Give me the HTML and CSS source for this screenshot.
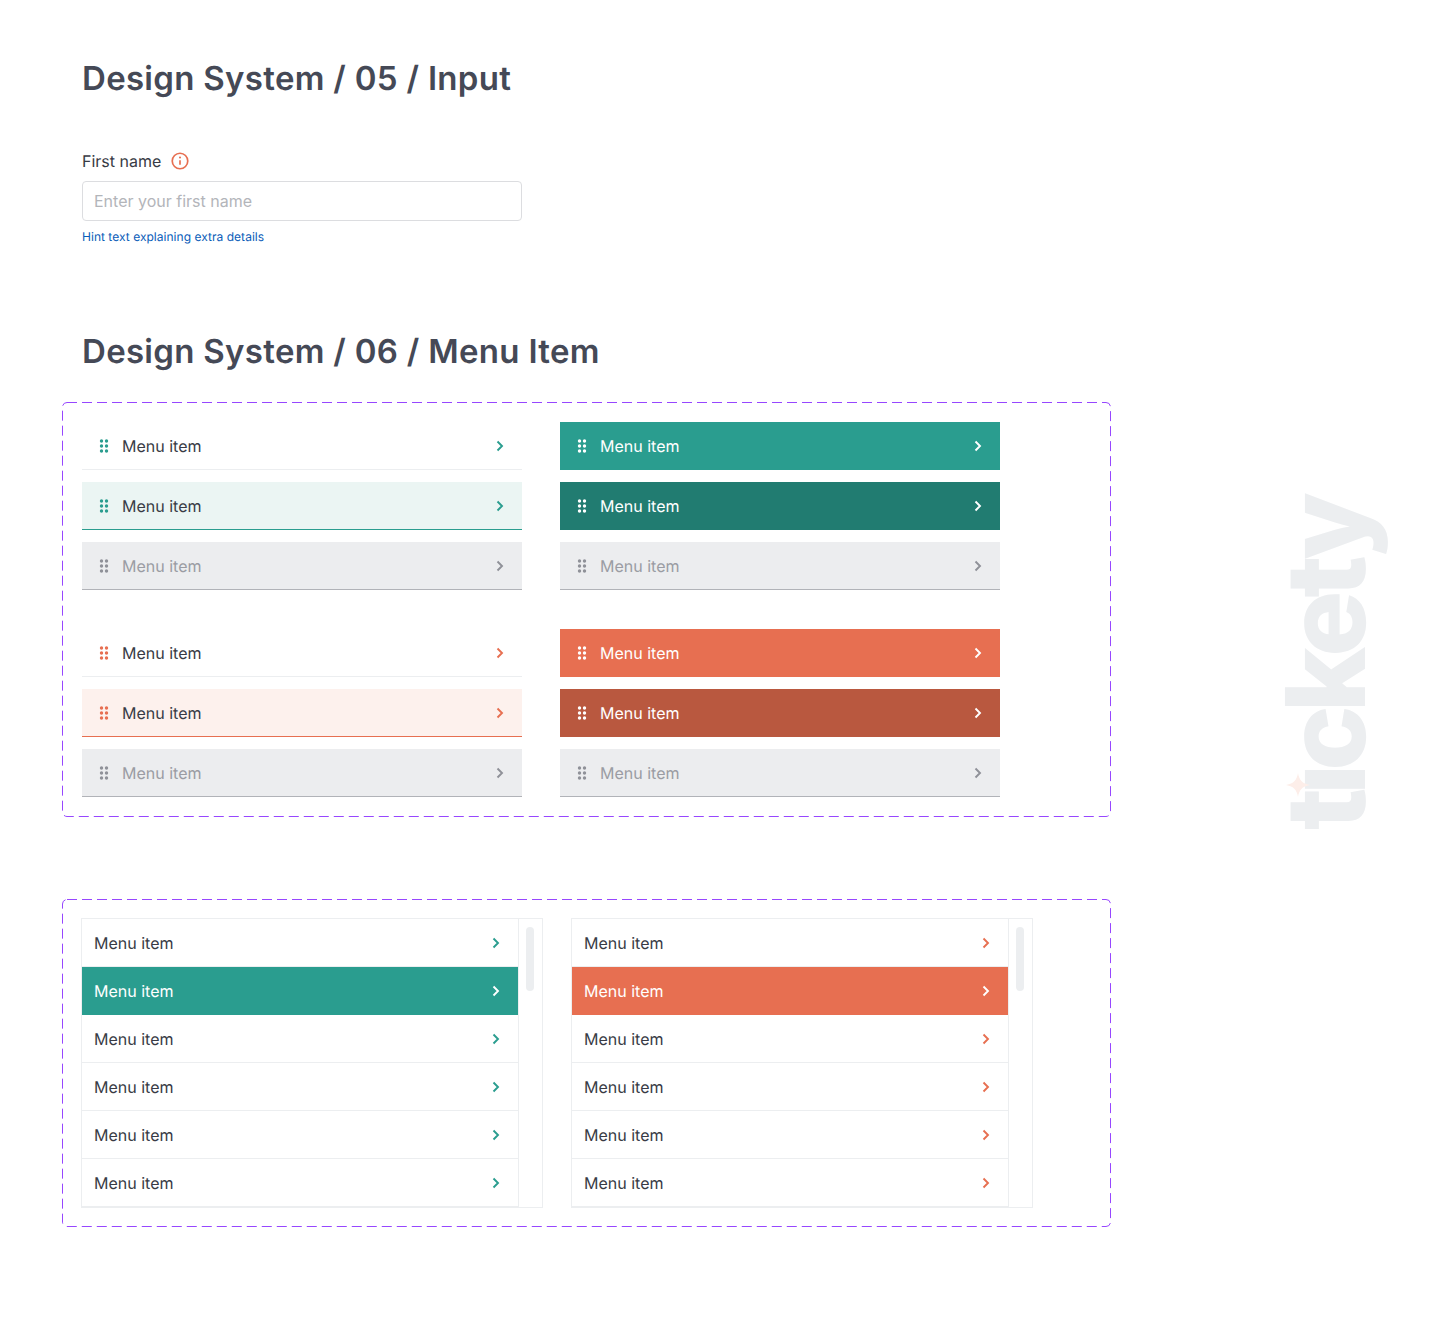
FILE: index.html
```html
<!DOCTYPE html>
<html lang="en">
  <head>
    <meta charset="UTF-8" />
    <meta name="viewport" content="width=device-width, initial-scale=1.0" />
    <title>Design System</title>
    <link rel="stylesheet" href="styles.css">
  </head>
  <body>
    <svg class="icon-defs" width="0" height="0">
      <symbol id="grip" viewBox="0 0 24 24">
        <circle cx="9.5" cy="7" r="1.7" /><circle cx="14.5" cy="7" r="1.7" />
        <circle cx="9.5" cy="12" r="1.7" /><circle cx="14.5" cy="12" r="1.7" />
        <circle cx="9.5" cy="17" r="1.7" /><circle cx="14.5" cy="17" r="1.7" />
      </symbol>
      <symbol id="chevron" viewBox="0 0 24 24">
        <path d="M9.500 7.500 14 12l-4.500 4.500" fill="none" stroke="currentColor" stroke-width="1.900" />
      </symbol>
    </svg>

    <div class="page">
      <h1 class="page-title">Design System / 05 / Input</h1>

      <div class="field">
        <div class="field-label">
          <span>First name</span>
          <svg class="info-icon" viewBox="0 0 16 16" width="18" height="18">
            <circle cx="8" cy="8" r="6.900" fill="none" stroke="currentColor" stroke-width="1.500" />
            <path d="M8 7.300v4" fill="none" stroke="currentColor" stroke-width="1.500" />
            <circle cx="8" cy="4.900" r=".95" fill="currentColor" />
          </svg>
        </div>
        <input class="field-input" type="text" placeholder="Enter your first name" />
        <p class="field-hint">Hint text explaining extra details</p>
      </div>

      <h1 class="page-title">Design System / 06 / Menu Item</h1>

      <section class="frame frame-items">
        <svg class="frame-dash"><rect /></svg>

        <div class="item-grid">
          <div class="item-col">
            <div class="menu-item teal plain"><svg class="grip"><use href="#grip" /></svg><span>Menu item</span><svg class="chevron"><use href="#chevron" /></svg></div>
            <div class="menu-item teal tint"><svg class="grip"><use href="#grip" /></svg><span>Menu item</span><svg class="chevron"><use href="#chevron" /></svg></div>
            <div class="menu-item disabled"><svg class="grip"><use href="#grip" /></svg><span>Menu item</span><svg class="chevron"><use href="#chevron" /></svg></div>
          </div>
          <div class="item-col">
            <div class="menu-item teal solid"><svg class="grip"><use href="#grip" /></svg><span>Menu item</span><svg class="chevron"><use href="#chevron" /></svg></div>
            <div class="menu-item teal dark"><svg class="grip"><use href="#grip" /></svg><span>Menu item</span><svg class="chevron"><use href="#chevron" /></svg></div>
            <div class="menu-item disabled"><svg class="grip"><use href="#grip" /></svg><span>Menu item</span><svg class="chevron"><use href="#chevron" /></svg></div>
          </div>
          <div class="item-col">
            <div class="menu-item coral plain"><svg class="grip"><use href="#grip" /></svg><span>Menu item</span><svg class="chevron"><use href="#chevron" /></svg></div>
            <div class="menu-item coral tint"><svg class="grip"><use href="#grip" /></svg><span>Menu item</span><svg class="chevron"><use href="#chevron" /></svg></div>
            <div class="menu-item disabled"><svg class="grip"><use href="#grip" /></svg><span>Menu item</span><svg class="chevron"><use href="#chevron" /></svg></div>
          </div>
          <div class="item-col">
            <div class="menu-item coral solid"><svg class="grip"><use href="#grip" /></svg><span>Menu item</span><svg class="chevron"><use href="#chevron" /></svg></div>
            <div class="menu-item coral dark"><svg class="grip"><use href="#grip" /></svg><span>Menu item</span><svg class="chevron"><use href="#chevron" /></svg></div>
            <div class="menu-item disabled"><svg class="grip"><use href="#grip" /></svg><span>Menu item</span><svg class="chevron"><use href="#chevron" /></svg></div>
          </div>
        </div>
      </section>

      <section class="frame frame-lists">
        <svg class="frame-dash"><rect /></svg>

        <div class="list teal">
          <div class="list-rows">
            <div class="list-row"><span>Menu item</span><svg class="chevron"><use href="#chevron" /></svg></div>
            <div class="list-row active"><span>Menu item</span><svg class="chevron"><use href="#chevron" /></svg></div>
            <div class="list-row"><span>Menu item</span><svg class="chevron"><use href="#chevron" /></svg></div>
            <div class="list-row"><span>Menu item</span><svg class="chevron"><use href="#chevron" /></svg></div>
            <div class="list-row"><span>Menu item</span><svg class="chevron"><use href="#chevron" /></svg></div>
            <div class="list-row"><span>Menu item</span><svg class="chevron"><use href="#chevron" /></svg></div>
          </div>
          <div class="list-track"><div class="list-thumb"></div></div>
        </div>

        <div class="list coral">
          <div class="list-rows">
            <div class="list-row"><span>Menu item</span><svg class="chevron"><use href="#chevron" /></svg></div>
            <div class="list-row active"><span>Menu item</span><svg class="chevron"><use href="#chevron" /></svg></div>
            <div class="list-row"><span>Menu item</span><svg class="chevron"><use href="#chevron" /></svg></div>
            <div class="list-row"><span>Menu item</span><svg class="chevron"><use href="#chevron" /></svg></div>
            <div class="list-row"><span>Menu item</span><svg class="chevron"><use href="#chevron" /></svg></div>
            <div class="list-row"><span>Menu item</span><svg class="chevron"><use href="#chevron" /></svg></div>
          </div>
          <div class="list-track"><div class="list-thumb"></div></div>
        </div>
      </section>

      <div class="logo">
        <span class="logo-text">tıckety</span>
        <svg class="logo-star" viewBox="0 0 24 24" width="24" height="24">
          <path d="M12 0c1.200 7 4 10.500 12 12-8 1.500-10.800 5-12 12-1.200-7-4-10.500-12-12 8-1.500 10.800-5 12-12z" />
        </svg>
      </div>
    </div>
  </body>
</html>
```

FILE: styles.css
```css
* {
  margin: 0;
  padding: 0;
  box-sizing: border-box;
  font-family: "Inter", sans-serif;
}

body {
  background-color: #ffffff;
  color: #383b45;
  overflow: hidden;
  text-rendering: geometricPrecision;
}

.icon-defs {
  display: block;
}

.page {
  position: relative;
  width: 1440px;
  height: 1320px;
  padding: 54px 0 0 62px;
}

.page-title {
  margin-left: 20px;
  font-size: 33px;
  line-height: 48px;
  font-weight: 600;
  letter-spacing: 0.3px;
  color: #454956;
}

/* input */

.field {
  width: 440px;
  height: 176px;
  margin: 49px 0 0 20px;
}

.field-label {
  display: flex;
  align-items: center;
  gap: 10px;
  height: 20px;
  font-size: 16px;
  color: #383b45;
}

.info-icon {
  color: #e76f51;
}

.field-input {
  display: block;
  width: 100%;
  height: 40px;
  margin-top: 10px;
  padding: 0 11px;
  border: 1px solid #dcdde0;
  border-radius: 4px;
  font-size: 16px;
  outline: none;
}

.field-input::placeholder {
  color: #b3b5ba;
}

.field-hint {
  margin-top: 8px;
  font-size: 12px;
  line-height: 15px;
  letter-spacing: 0.03px;
  color: #0a5cb8;
}

/* dashed frames */

.frame {
  position: relative;
  width: 1049px;
}

.frame-dash {
  position: absolute;
  top: 0;
  left: 0;
  width: 100%;
  height: 100%;
  pointer-events: none;
}

.frame-dash rect {
  x: 0.5px;
  y: 0.5px;
  width: calc(100% - 1px);
  height: calc(100% - 1px);
  rx: 4.5px;
  fill: none;
  stroke: #9747ff;
  stroke-dasharray: 10 5;
}

.frame-items {
  height: 415px;
  margin-top: 27px;
  padding: 20px;
}

.frame-lists {
  display: flex;
  gap: 28px;
  height: 328px;
  margin-top: 82px;
  padding: 19px;
}

/* menu items */

.item-grid {
  display: grid;
  grid-template-columns: 440px 440px;
  column-gap: 38px;
  row-gap: 39px;
}

.item-col {
  display: flex;
  flex-direction: column;
  gap: 12px;
}

.menu-item {
  display: flex;
  align-items: center;
  gap: 6px;
  height: 48px;
  padding: 0 10px;
  border-bottom: 1px solid transparent;
  font-size: 16px;
  color: #383b45;
}

.menu-item span {
  flex: 1;
}

.grip,
.chevron {
  flex: none;
  width: 24px;
  height: 24px;
  fill: currentColor;
}

.teal .grip,
.teal .chevron {
  color: #2a9d8f;
}

.coral .grip,
.coral .chevron {
  color: #e76f51;
}

.menu-item.plain {
  border-bottom-color: #eceef0;
}

.teal.tint {
  background-color: #ebf5f3;
  border-bottom-color: #2a9d8f;
}

.coral.tint {
  background-color: #fdf1ed;
  border-bottom-color: #e76f51;
}

.teal.solid {
  background-color: #2a9d8f;
}

.teal.dark {
  background-color: #217c71;
}

.coral.solid {
  background-color: #e76f51;
}

.coral.dark {
  background-color: #b9583f;
}

.menu-item.solid,
.menu-item.dark {
  color: #ffffff;
}

.menu-item.solid .grip,
.menu-item.solid .chevron,
.menu-item.dark .grip,
.menu-item.dark .chevron {
  color: #ffffff;
}

.menu-item.disabled {
  background-color: #ecedef;
  border-bottom-color: #b1b3b8;
  color: #9a9ca3;
}

.menu-item.disabled .grip,
.menu-item.disabled .chevron {
  color: #8f9198;
}

/* scrolling lists */

.list {
  display: flex;
  width: 462px;
  height: 290px;
  border: 1px solid #eceef0;
}

.list-rows {
  width: 436px;
  border-bottom: 1px solid #eceef0;
}

.list-row {
  display: flex;
  align-items: center;
  justify-content: space-between;
  height: 48px;
  padding: 0 10px 0 12px;
  border-bottom: 1px solid #eceef0;
  font-size: 16px;
  color: #383b45;
}

.teal .list-row.active {
  background-color: #2a9d8f;
}

.coral .list-row.active {
  background-color: #e76f51;
}

.list-row.active {
  border-bottom: none;
  color: #ffffff;
}

.list-row.active .chevron {
  color: #ffffff;
}

.list-track {
  flex: 1;
  padding: 8px 7px;
  border-left: 1px solid #eceef0;
}

.list-thumb {
  width: 8px;
  height: 64px;
  border-radius: 4px;
  background-color: #eceef0;
}

/* logo watermark */

.logo {
  position: absolute;
  top: 490px;
  left: 1270px;
  width: 140px;
  height: 340px;
}

.logo-text {
  position: absolute;
  top: 0;
  left: -15px;
  writing-mode: vertical-rl;
  transform: rotate(180deg);
  height: 340px;
  font-size: 110px;
  line-height: 140px;
  font-weight: 800;
  letter-spacing: -7px;
  color: #eceef0;
}

.logo-star {
  position: absolute;
  top: 283px;
  left: 16px;
  fill: #fdeee9;
}
```
